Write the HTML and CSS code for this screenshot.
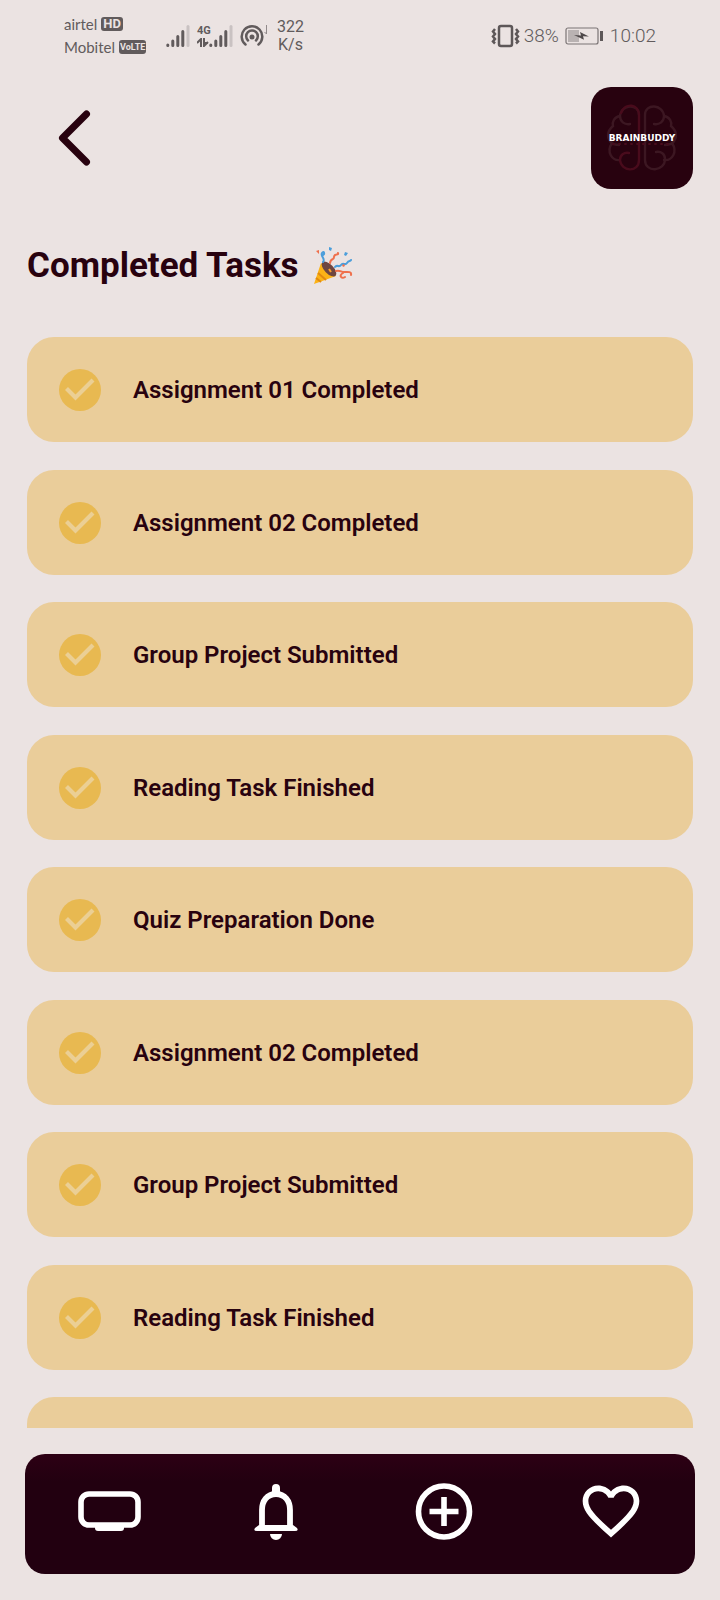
FILE: index.html
```html
<!DOCTYPE html>
<html lang="en">
<head>
<meta charset="utf-8">
<meta name="viewport" content="width=device-width, initial-scale=1">
<title>Completed Tasks</title>
<link rel="stylesheet" href="styles.css">
</head>
<body>
<svg class="defs" aria-hidden="true">
  <symbol id="check" viewBox="0 0 42 42"><circle cx="21" cy="21" r="21" fill="#e8b951"/><path d="M7.500 19.500l9 9L34 11" fill="none" stroke="#ebcf94" stroke-width="4.200"/></symbol>
  <symbol id="signal" viewBox="0 0 24 22"><g stroke="#615b5c" stroke-width="3" stroke-linecap="round"><path d="M1.800 20v.5M6.800 16v4.500M11.800 11.500v9M16.800 6.500v14"/><path d="M22 1.500v19" stroke="#c9c2c2"/></g></symbol>
</svg>

<div class="status">
  <div class="carriers">
    <div class="carrier">airtel <span class="tag">HD</span></div>
    <div class="carrier">Mobitel <span class="tag tag-volte">VoLTE</span></div>
  </div>
  <svg class="signal" aria-hidden="true"><use href="#signal"/></svg>
  <div class="network">
    <div class="network-type">
      <span>4G</span>
      <svg width="12" height="9" viewBox="0 0 12 9" aria-hidden="true"><path d="M0 5l4-4v8M11 5H7.500M7 0v8l4-4" fill="none" stroke="#615b5c" stroke-width="2"/></svg>
    </div>
    <svg class="signal" aria-hidden="true"><use href="#signal"/></svg>
  </div>
  <svg class="hotspot" width="29" height="24" viewBox="0 0 29 24" aria-hidden="true">
    <g fill="none" stroke="#615b5c" stroke-width="2.500" stroke-linecap="round"><path d="M5.500 20.500a10.300 10.300 0 1 1 13 0"/><path d="M8 16.500a5.800 5.800 0 1 1 8 0"/></g>
    <circle cx="12" cy="13" r="2.500" fill="#615b5c"/>
    <path d="M26.500 1v9m-2-2l2 2" fill="none" stroke="#918a8b"/>
  </svg>
  <div class="speed"><span>322</span><span>K/s</span></div>
  <div class="status-right">
    <svg width="29" height="24" viewBox="0 0 29 24" aria-hidden="true"><g fill="none" stroke="#5d5758"><rect x="8" y="2" width="13" height="20" rx="2" stroke-width="2.500"/><path d="M4 5L2 7.500 4 10l-2 2.500L4 15l-2 2.500 2 2M25 5l2 2.500-2 2.500 2 2.500-2 2.500 2 2.500-2 2" stroke-width="2.500"/></g></svg>
    <span class="percent">38%</span>
    <svg class="battery" width="39" height="20" viewBox="0 0 39 20" aria-hidden="true"><rect x="1" y="2" width="32" height="16" rx="2" fill="none" stroke="#7b7475" stroke-width="1.200"/><path d="M3 4h11v12H3z" fill="#b9b2b2"/><path d="M9 9l7 .500L15 6l9 4.500-6-.200 1 3.500z" fill="#4f494a"/><path d="M36.500 5v10" stroke="#5d5758" stroke-width="3"/></svg>
    <time>10:02</time>
  </div>
</div>

<header class="header">
  <button class="back" type="button" aria-label="Back">
    <svg width="40" height="60" viewBox="0 0 40 60" aria-hidden="true"><path d="M31.500 6l-24 24 24 24" fill="none" stroke="#28020f" stroke-width="7" stroke-linecap="round" stroke-linejoin="round"/></svg>
  </button>
  <div class="logo">
    <svg viewBox="0 0 102 102" aria-hidden="true"><g fill="none" stroke="#3c1722" stroke-width="2.400" stroke-linecap="round">
      <path d="M54 28c0-12 18-11 19 1 0 6-5 9-10 8M54 28v45c0 13 20 12 20-1 0-5-4-8-9-7M73 29c6 1 8 6 7 10 7 6 6 13 1 17M81 56c6 9 0 18-8 17M84 50c0 7-6 8-10 8"/>
      <path d="M48 28c0-12-18-11-19 1 0 6 5 9 10 8M29 29c-6 1-8 6-7 10-7 6-6 13-1 17M21 56c-6 9 0 18 8 17M18 50c0 7 6 8 10 8"/>
      <path d="M30 26c4-11 18-9 18 2v45c0 13-18 12-19 0 0-5 4-8 9-7" stroke="#490b1c"/>
      <path d="M22 57h60" stroke="#490b1c" stroke-width="2" stroke-dasharray="1 5"/></g></svg>
    <span class="logo-name">BRAINBUDDY</span>
  </div>
</header>

<h1 class="title">Completed Tasks
  <svg width="40" height="40" viewBox="0 0 40 40" role="img" aria-label="Party popper">
    <path d="M8 17L1 38l22-8z" fill="#fcb316"/><path d="M5 27l8 7M3 32l5 4" stroke="#e28a10" stroke-width="2"/>
    <ellipse cx="16" cy="23" rx="4.500" ry="9.500" transform="rotate(-44 16 23)" fill="#6d4641"/>
    <g fill="none" stroke-width="2" stroke-linecap="round"><path d="M10 16c3-3-3-6-1-9s3 1 1 2M22 21c2-3 4 1 6-2s4 1 6-2 3-1 4-3" stroke="#4b9edb"/><path d="M17 17c1-6 4-2 4-6s5-1 4-4M23 25c4-1 5 1 8 1s8-1 7 3M30 27c-5 3-1 6 2 4" stroke="#ef704c"/></g>
    <path d="M3 5l3-1v4zM29 19l2-1 1 2-2 1z" fill="#ef704c"/><path d="M16 1l3 1-1 3-2-1zM32 6l3 1-2 3-2-1z" fill="#4b9edb"/><path d="M16 23l2 3" stroke="#f9a12c" stroke-width="2"/>
  </svg>
</h1>

<main class="scroll">
  <ul class="tasks">
    <li class="task"><svg class="check" aria-hidden="true"><use href="#check"/></svg><span>Assignment 01 Completed</span></li>
    <li class="task"><svg class="check" aria-hidden="true"><use href="#check"/></svg><span>Assignment 02 Completed</span></li>
    <li class="task"><svg class="check" aria-hidden="true"><use href="#check"/></svg><span>Group Project Submitted</span></li>
    <li class="task"><svg class="check" aria-hidden="true"><use href="#check"/></svg><span>Reading Task Finished</span></li>
    <li class="task"><svg class="check" aria-hidden="true"><use href="#check"/></svg><span>Quiz Preparation Done</span></li>
    <li class="task"><svg class="check" aria-hidden="true"><use href="#check"/></svg><span>Assignment 02 Completed</span></li>
    <li class="task"><svg class="check" aria-hidden="true"><use href="#check"/></svg><span>Group Project Submitted</span></li>
    <li class="task"><svg class="check" aria-hidden="true"><use href="#check"/></svg><span>Reading Task Finished</span></li>
    <li class="task"></li>
  </ul>
</main>

<nav class="nav" aria-label="Main">
  <button class="nav-item" type="button" aria-label="Home"><svg viewBox="0 0 68 68" aria-hidden="true"><rect x="6" y="17" width="57" height="31" rx="8" fill="none" stroke="#fff" stroke-width="5.600"/><path d="M20 48h29v3q0 3-3 3H23q-3 0-3-3z" fill="#fff"/></svg></button>
  <button class="nav-item" type="button" aria-label="Notifications"><svg viewBox="0 0 68 68" aria-hidden="true"><path d="M20 50V33c0-9 5-16 14-16s14 7 14 16v17" fill="none" stroke="#fff" stroke-width="5.800"/><path d="M30 16v-5a4 4 0 0 1 8 0v5zM17 48h34l4 3q2 3-2 3H15q-4 0-2-3zM28 57h12a6 6 0 0 1-12 0z" fill="#fff"/></svg></button>
  <button class="nav-item" type="button" aria-label="Add"><svg viewBox="0 0 68 68" aria-hidden="true"><circle cx="34" cy="34.500" r="25.500" fill="none" stroke="#fff" stroke-width="5.600"/><path d="M34 20v29M19.500 34.500h29" stroke="#fff" stroke-width="5.600"/></svg></button>
  <button class="nav-item" type="button" aria-label="Favorites"><svg viewBox="0 0 24 24" aria-hidden="true"><path fill="#fff" d="M16.500 3c-1.740 0-3.410.81-4.500 2.090C10.910 3.810 9.240 3 7.500 3 4.420 3 2 5.420 2 8.500c0 3.780 3.400 6.860 8.550 11.540L12 21.350l1.450-1.320C18.600 15.360 22 12.280 22 8.500 22 5.420 19.580 3 16.500 3zm-4.400 15.550l-.1.100-.1-.1C7.140 14.240 4 11.390 4 8.500 4 6.500 5.500 5 7.500 5c1.540 0 3.040.99 3.570 2.360h1.870C13.460 5.990 14.960 5 16.500 5c2 0 3.500 1.500 3.500 3.500 0 2.890-3.140 5.740-7.900 10.050z"/></svg></button>
</nav>
</body>
</html>
```

FILE: styles.css
```css
* {
  box-sizing: border-box;
}

body {
  margin: 0;
  height: 100vh;
  display: flex;
  flex-direction: column;
  background: #ebe3e2;
  color: #28020f;
  font-family: Roboto, "Liberation Sans", sans-serif;
}

svg {
  display: block;
  flex-shrink: 0;
}

button {
  padding: 0;
  border: 0;
  background: none;
  cursor: pointer;
}

.defs {
  position: absolute;
  width: 0;
  height: 0;
}

.status {
  display: flex;
  align-items: center;
  height: 71px;
  padding: 0 64px;
  color: #615b5c;
}

.carriers {
  width: 102px;
  font-family: Lato, sans-serif;
  font-size: 15px;
  line-height: 23px;
}

.carrier {
  display: flex;
  align-items: center;
  gap: 4px;
}

.tag {
  padding: 0 2px;
  border-radius: 3px;
  background: #615b5c;
  color: #ebe3e2;
  font: bold 13px/14px Roboto, sans-serif;
}

.tag-volte {
  padding: 0 1px;
  font-size: 9px;
}

.signal {
  width: 24px;
  height: 22px;
}

.network {
  display: flex;
  margin-left: 7px;
}

.network-type {
  display: flex;
  flex-direction: column;
  justify-content: space-between;
  width: 12px;
  font-size: 11px;
  font-weight: bold;
  line-height: 11px;
}

.hotspot {
  margin-left: 7px;
}

.speed {
  display: flex;
  flex-direction: column;
  align-items: center;
  margin-left: 8px;
  font-size: 16px;
  line-height: 18px;
}

.status-right {
  display: flex;
  align-items: center;
  margin-left: auto;
  font-size: 19px;
  font-weight: 300;
}

.percent {
  margin-left: 4px;
}

.battery {
  margin: 0 6px;
}

.header {
  display: flex;
  justify-content: space-between;
  align-items: center;
  margin-top: 16px;
  padding: 0 27px 0 55px;
}

.logo {
  display: grid;
  place-items: center;
  width: 102px;
  height: 102px;
  border-radius: 20px;
  background: #28020f;
}

.logo > * {
  grid-area: 1 / 1;
}

.logo svg {
  width: 100%;
}

.logo-name {
  color: #fff;
  font: bold 9px/12px "DejaVu Sans", sans-serif;
}

.title {
  display: flex;
  align-items: center;
  gap: 14px;
  margin: 51px 27px 46px;
  font-size: 35px;
  line-height: 51px;
}

.scroll {
  flex: 1;
  min-height: 0;
  padding: 0 27px;
  overflow-y: auto;
  scrollbar-width: none;
}

.tasks {
  margin: 0;
  padding: 0;
  list-style: none;
}

.task {
  display: flex;
  align-items: center;
  gap: 32px;
  min-height: 105px;
  margin-bottom: 28px;
  padding: 0 32px;
  border-radius: 27px;
  background: #eacd9a;
  font-size: 24px;
  font-weight: 600;
}

.task:nth-child(even) {
  margin-bottom: 27px;
}

.check {
  width: 42px;
  height: 42px;
}

.nav {
  display: flex;
  margin: 26px 25px;
  padding: 23px 0 29px;
  border-radius: 20px;
  background: linear-gradient(#2d0014, #220010 28px);
}

.nav-item {
  display: flex;
  flex: 1;
  justify-content: center;
}

.nav-item svg {
  width: 68px;
  height: 68px;
}
```
